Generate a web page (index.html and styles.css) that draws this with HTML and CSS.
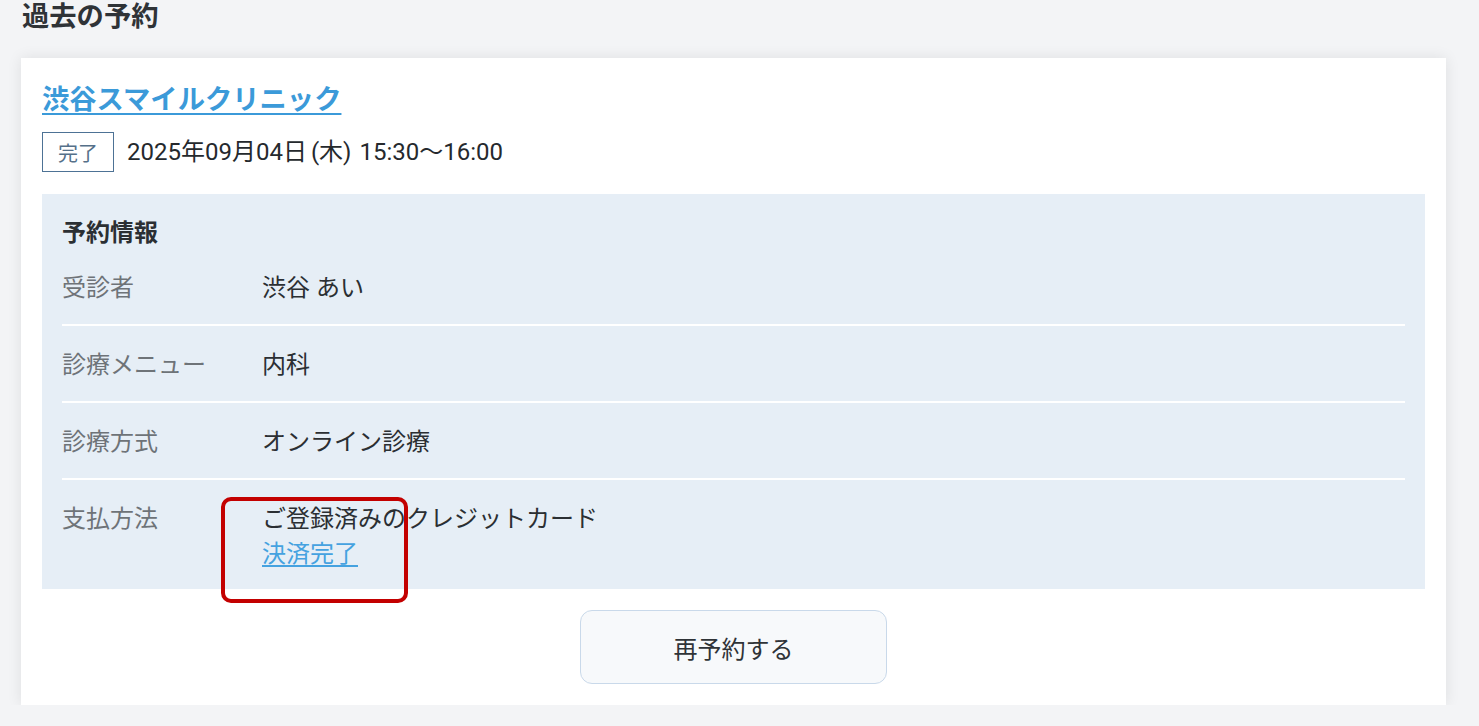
FILE: index.html
```html
<!DOCTYPE html>
<html lang="ja">
<head>
<meta charset="utf-8">
<title>過去の予約</title>
<link rel="stylesheet" href="styles.css">
</head>
<body>
<main class="page">
  <h1 class="page-title">過去の予約</h1>
  <section class="card">
    <a class="clinic-name" href="#">渋谷スマイルクリニック</a>
    <div class="status-row">
      <span class="badge">完了</span>
      <span class="datetime">2025年09月04日<span class="weekday">(木)</span> 15:30〜16:00</span>
    </div>
    <div class="info-panel">
      <h2 class="info-title">予約情報</h2>
      <div class="info-row">
        <div class="info-label">受診者</div>
        <div class="info-value">渋谷 あい</div>
      </div>
      <div class="info-row">
        <div class="info-label">診療メニュー</div>
        <div class="info-value">内科</div>
      </div>
      <div class="info-row">
        <div class="info-label">診療方式</div>
        <div class="info-value">オンライン診療</div>
      </div>
      <div class="info-row">
        <div class="info-label">支払方法</div>
        <div class="info-value payment">
          <div>ご登録済みのクレジットカード</div>
          <a class="pay-link" href="#">決済完了</a>
          <span class="highlight-box"></span>
        </div>
      </div>
    </div>
    <div class="actions">
      <button class="rebook-btn" type="button">再予約する</button>
    </div>
  </section>
</main>
</body>
</html>
```

FILE: styles.css
```css
* {
  box-sizing: border-box;
}

html, body {
  margin: 0;
  padding: 0;
}

body {
  background: #f3f4f6;
  font-family: Roboto, "Noto Sans CJK JP", sans-serif;
  color: #2b2f33;
  font-size: 24px;
}

.page {
  padding: 0 33px 0 21px;
}

.page-title {
  margin: 0 0 24px 1px;
  font-size: 27.3px;
  line-height: 34px;
  font-weight: 700;
  color: #2f3337;
}

.card {
  background: #ffffff;
  padding: 21px;
  box-shadow: 0 0 14px rgba(0, 0, 0, 0.09);
}

.clinic-name {
  display: block;
  width: max-content;
  font-size: 27.3px;
  line-height: 42px;
  font-weight: 700;
  color: #3b9ad9;
  text-decoration: underline;
  text-decoration-thickness: 2px;
  text-underline-offset: 4px;
}

.status-row {
  display: flex;
  align-items: center;
  gap: 13px;
  margin-top: 11px;
}

.badge {
  display: inline-flex;
  align-items: center;
  justify-content: center;
  height: 40px;
  padding: 0 15px;
  border: 1px solid #4d7295;
  font-size: 20px;
  color: #557089;
}

.datetime {
  font-size: 24px;
  line-height: 30px;
  color: #25292d;
}

.weekday {
  margin: 0 2px 0 4px;
}

.info-panel {
  margin-top: 22px;
  background: #e6eef6;
  padding: 24px 20px 0;
}

.info-title {
  margin: 0;
  font-size: 24px;
  line-height: 31px;
  font-weight: 700;
  color: #2b2f33;
}

.info-row {
  display: flex;
  padding: 22px 0 18px;
  border-bottom: 2px solid #ffffff;
  line-height: 35px;
}

.info-row:last-child {
  border-bottom: none;
  padding-bottom: 17px;
}

.info-label {
  width: 200px;
  flex-shrink: 0;
  color: #6e7378;
}

.info-value {
  color: #2b2f33;
}

.payment {
  position: relative;
}

.pay-link {
  color: #45a2e0;
  text-decoration: underline;
  text-underline-offset: 3px;
}

.highlight-box {
  position: absolute;
  left: -41px;
  top: -5px;
  width: 187px;
  height: 106px;
  border: 4px solid #c30000;
  border-radius: 10px;
}

.actions {
  display: flex;
  justify-content: center;
  margin-top: 21px;
}

.rebook-btn {
  width: 307px;
  height: 74px;
  background: #f7f9fb;
  border: 1.5px solid #c9d9ea;
  border-radius: 12px;
  font-family: Roboto, "Noto Sans CJK JP", sans-serif;
  font-size: 24px;
  color: #2f3337;
}
```
